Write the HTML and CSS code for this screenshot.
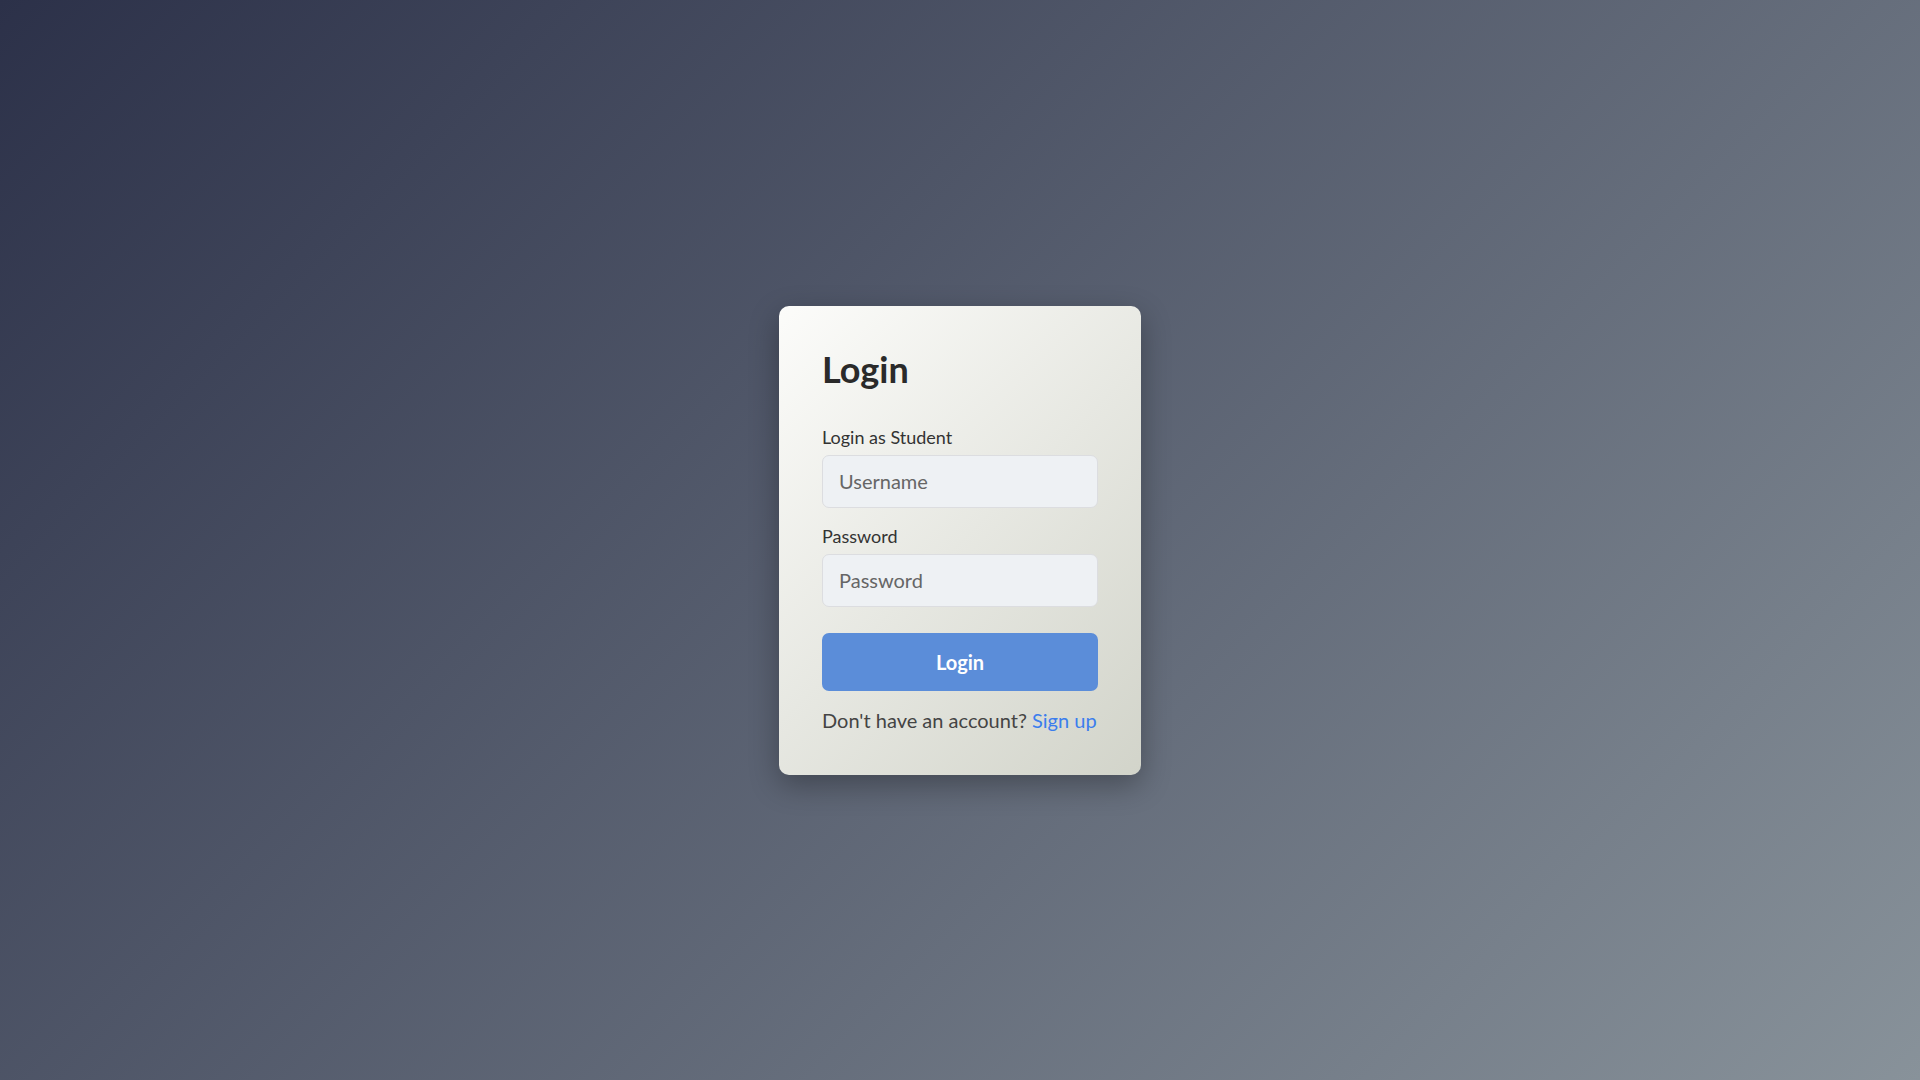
FILE: index.html
```html
<!DOCTYPE html>
<html lang="en">
<head>
<meta charset="utf-8">
<title>Login</title>
<link rel="stylesheet" href="styles.css">
</head>
<body>
<main class="page">
  <form class="card">
    <h1 class="title">Login</h1>
    <label class="label label-first" for="username">Login as Student</label>
    <input class="field" id="username" type="text" placeholder="Username">
    <label class="label label-second" for="password">Password</label>
    <input class="field" id="password" type="password" placeholder="Password">
    <button class="btn" type="button">Login</button>
    <p class="footer">Don't have an account? <a class="link" href="#">Sign up</a></p>
  </form>
</main>
</body>
</html>
```
FILE: styles.css
```css
* { box-sizing: border-box; }
html, body { margin: 0; padding: 0; height: 100%; }
body {
  font-family: "Lato", "Open Sans", sans-serif;
  background: linear-gradient(135deg, #2c3149 0%, #88929a 100%);
}
.page {
  height: 100vh;
  display: flex;
  align-items: center;
  justify-content: center;
}
.card {
  width: 362px;
  padding: 41px 43px 43px;
  border-radius: 10px;
  background: linear-gradient(135deg, #fcfcfa 0%, #d2d4ca 100%);
  box-shadow: 0 10px 30px rgba(0, 0, 0, 0.3);
  display: flex;
  flex-direction: column;
}
.title {
  margin: 0;
  font-size: 36px;
  line-height: 44px;
  font-weight: 700;
  color: #2a2a2a;
}
.label {
  font-size: 18px;
  line-height: 20px;
  color: #333;
  margin-bottom: 8px;
}
.label-first { margin-top: 36px; }
.label-second { margin-top: 18px; }
.field {
  height: 53px;
  width: 100%;
  border: 1px solid #dcdde0;
  border-radius: 7px;
  background: #eef1f4;
  padding: 0 16px;
  font-family: inherit;
  font-size: 20px;
  color: #333;
  outline: none;
}
.field::placeholder { color: #666; }
.btn {
  margin-top: 26px;
  height: 58px;
  width: 100%;
  border: none;
  border-radius: 7px;
  background: #5b8dd9;
  color: #fff;
  font-family: inherit;
  font-size: 20px;
  font-weight: 700;
  cursor: pointer;
}
.footer {
  margin: 17px 0 0;
  font-size: 20px;
  line-height: 24px;
  color: #444;
}
.link {
  color: #3b7ded;
  text-decoration: none;
}
```
